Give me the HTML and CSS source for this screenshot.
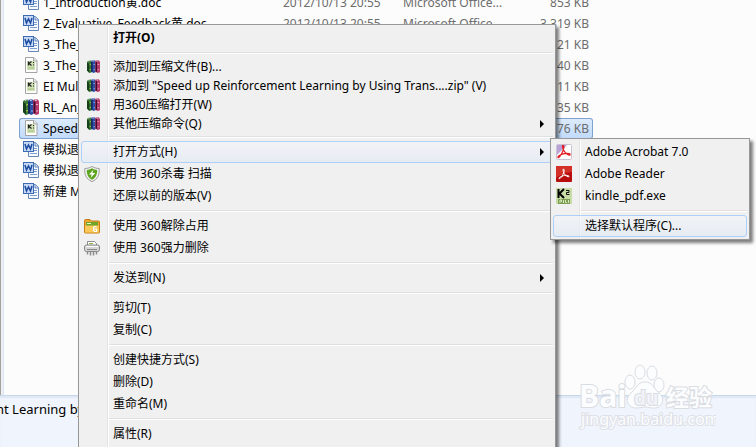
FILE: index.html
```html
<!DOCTYPE html>
<html lang="zh-CN">
<head>
    <meta charset="utf-8">
    <title>Explorer</title>
    <link rel="stylesheet" href="styles.css">
</head>
<body>
    <svg class="sprite" aria-hidden="true">
        <symbol id="word" viewBox="0 0 16 16">
            <path d="M5.5 1.5h7l3 3v11h-10z" fill="#f6faff" stroke="#6486b8"/>
            <path d="M12 1.5v3.5h3.5" fill="#cfdff5" stroke="#6486b8"/>
            <path d="M11 7.5h3M11 9.5h3M7 12.5h7" stroke="#7d9fd4"/>
            <rect x="0.5" y="0.5" width="10" height="10" fill="#c5d9f5" stroke="#3d6cb5"/>
            <path d="M2 3l1.500 5L5.500 4l2 4L9 3" fill="none" stroke="#1b4a9e" stroke-width="1.500"/>
        </symbol>
        <symbol id="kfile" viewBox="0 0 16 16">
            <path d="M2.500 0.500h8.500l3 3v12H2.500z" fill="#fdfdfd" stroke="#a3a3a3"/>
            <path d="M10.500 0.500v3.500h3.500" fill="#e6e6e6" stroke="#a3a3a3"/>
            <rect x="4" y="4" width="8" height="9" fill="#cfe0b4"/>
            <path d="M5.500 4.500v4M8.500 4.500l-2.500 2 2.500 2M10 5.500h1M10 8h1" fill="none" stroke="#222" stroke-width="1.200"/>
            <path d="M5 11h6" stroke="#a3bd80"/>
        </symbol>
        <symbol id="books" viewBox="0 0 16 16">
            <path d="M0 2l4-2 2 2v13l-3 1-3-3z" fill="#3b7a35"/>
            <path d="M0 3l3 2v11l-3-3z" fill="#163f1b"/>
            <path d="M3 6l2-.5M3 12l2-.5" stroke="#b5cf4a"/>
            <path d="M5 1l4-1 1.500 2v13l-2.500 1-3-2z" fill="#2c4fa5"/>
            <path d="M6 2.500v12" stroke="#101a48" stroke-width="1.500"/>
            <path d="M8 5.500h2M8 12h2" stroke="#8bbcf0"/>
            <path d="M10 1l4-1 2 2v13l-3 1-3-2z" fill="#b83a6c"/>
            <path d="M11.500 2.500v12" stroke="#3e0c2d" stroke-width="1.800"/>
            <path d="M13 5.500h2M13 12h2" stroke="#edb3c8"/>
            <path d="M2 1.500l2-1 1 1M7 1.500l2-.5M12 1.500l2-.5" fill="none" stroke="#ddd"/>
        </symbol>
        <symbol id="shield" viewBox="0 0 16 16">
            <path d="M8 .5C5.500 2 3 2.500.8 2.500.5 8.500 2 13 8 15.600 14 13 15.500 8.500 15.200 2.500 13 2.500 10.500 2 8 .5z" fill="#f4f4f4" stroke="#999"/>
            <path d="M8 2.300C6 3.500 4.500 3.800 2.800 4 2.800 8.500 4 11.800 8 13.800c4-2 5.200-5.300 5.200-9.800C11.500 3.800 10 3.500 8 2.300z" fill="#5da51e"/>
            <path d="M9.500 3.800L5 8.400h2.700L6.600 12l4.600-5H8.400z" fill="#fff"/>
        </symbol>
        <symbol id="folder" viewBox="0 0 16 16">
            <path d="M.5 2.500q0-1 1-1H6l1.500 1.500h7q1 0 1 1v10q0 1-1 1h-13q-1 0-1-1z" fill="#eea52d" stroke="#c67d15"/>
            <path d="M2 4h12v4H2z" fill="#6fa62b"/>
            <path d="M3 5.500h4" stroke="#e7f4c8"/>
            <path d="M1 7.500h14v7H1z" fill="#f9c95a"/>
            <path d="M12.500 8.500h-2l-1 1v3l1 1h2v-2.500h-3" fill="none" stroke="#fff" stroke-width="1.200"/>
        </symbol>
        <symbol id="shredder" viewBox="0 0 16 16">
            <path d="M3.500 6V1.500h7l2 2V6" fill="#fff" stroke="#8a8a8a"/>
            <path d="M5 3.500h4" stroke="#8cb640"/>
            <rect x=".5" y="5" width="15" height="6.500" rx="2" fill="#d5d5d5" stroke="#858585"/>
            <path d="M2 6.500h12" stroke="#fff"/>
            <path d="M3 9.500h10" stroke="#888"/>
            <path d="M3.500 11v3.500M6.500 11v4.500M9.500 11v4.500M12.500 11v3.500" stroke="#8d8d8d" stroke-width="1.500"/>
        </symbol>
        <symbol id="acrobat" viewBox="0 0 16 16">
            <rect x=".5" y=".5" width="15" height="15" rx="1" fill="#fff" stroke="#c9c3d2"/>
            <path d="M1 1h10L1 11z" fill="#b9a3d6"/>
            <path d="M7 1.500c1.500 0 .8 4-1 7.500S2.500 14 2 13.500c-.8-1 3-3.500 7-4s5.500.5 5 1.300c-.7 1-4.500-1-6-4S6 1.500 7 1.500z" fill="none" stroke="#e32129" stroke-width="1.300"/>
        </symbol>
        <symbol id="reader" viewBox="0 0 16 16">
            <rect width="16" height="16" rx="1" fill="#b80d0d"/>
            <path d="M0 0h16v6Q8 6 0 12z" fill="#d33028"/>
            <path d="M7.500 3c1.300 0 .7 3-.8 6S3.500 13 3 12.600c-.7-.8 2.500-2.600 5.500-3.100s5 .4 4.600 1.100c-.6.800-3.800-.8-5-3.100S6.800 3 7.500 3z" fill="none" stroke="#fff"/>
        </symbol>
        <symbol id="kindle" viewBox="0 0 16 16">
            <rect width="16" height="16" fill="#c8dca8"/>
            <path d="M2.500 1v9M8 1L3.500 5.500 8 10" fill="none" stroke="#000" stroke-width="2"/>
            <path d="M10 2.500h3v2h-2.500v2H13.500" fill="none" stroke="#111"/>
            <rect x="2" y="11" width="12" height="5" fill="#7c9e50"/>
            <path d="M4 15v-3h1.500v2M7.500 12v3M9.500 12v2.500h1.500M12.500 12v3" fill="none" stroke="#d8e8bd"/>
        </symbol>
    </svg>

    <div class="window">
        <div class="content">
            <div class="nav-edge"></div>
            <table class="files">
                <colgroup>
                    <col class="col-name"><col class="col-date"><col class="col-type"><col class="col-size">
                </colgroup>
                <tr><td><svg><use href="#word"/></svg>1_Introduction黄.doc</td><td>2012/10/13 20:55</td><td>Microsoft Office...</td><td>853 KB</td></tr>
                <tr><td><svg><use href="#word"/></svg>2_Evaluative_Feedback黄.doc</td><td>2012/10/13 20:55</td><td>Microsoft Office...</td><td>3,319 KB</td></tr>
                <tr><td><svg><use href="#word"/></svg>3_The_</td><td></td><td></td><td>21 KB</td></tr>
                <tr><td><svg><use href="#kfile"/></svg>3_The_</td><td></td><td></td><td>40 KB</td></tr>
                <tr><td><svg><use href="#kfile"/></svg>EI Mul</td><td></td><td></td><td>11 KB</td></tr>
                <tr><td><svg><use href="#books"/></svg>RL_An_</td><td></td><td></td><td>35 KB</td></tr>
                <tr class="selected"><td><svg><use href="#kfile"/></svg>Speed</td><td></td><td></td><td>76 KB</td></tr>
                <tr><td><svg><use href="#word"/></svg>模拟退</td><td></td><td></td><td></td></tr>
                <tr><td><svg><use href="#word"/></svg>模拟退</td><td></td><td></td><td></td></tr>
                <tr><td><svg><use href="#word"/></svg>新建 M</td><td></td><td></td><td></td></tr>
            </table>
        </div>
        <div class="details"><span>nt Learning by</span></div>
    </div>

    <svg class="watermark" viewBox="0 0 140 70">
        <g class="mark">
            <ellipse cx="54" cy="22" rx="5" ry="7"/>
            <ellipse cx="64" cy="12" rx="5" ry="7"/>
            <ellipse cx="76" cy="13" rx="5" ry="7"/>
            <ellipse cx="83" cy="25" rx="5" ry="7"/>
            <path d="M69 22c-8 0-8 6-14 11-7 6-3 15 5 15 4 0 6-1 9-1s5 1 9 1c8 0 12-9 5-15-6-5-6-11-14-11z"/>
            <text class="brand" x="3" y="47">Bai</text>
            <text class="brand du" x="58" y="45">du</text>
            <text class="brand cn" x="90" y="46">经验</text>
            <text class="site" x="5" y="65">jingyan.baidu.com</text>
        </g>
    </svg>

    <div class="menu context-menu">
        <button class="default">打开(O)</button>
        <hr>
        <button class="compact"><svg><use href="#books"/></svg>添加到压缩文件(B)...</button>
        <button class="compact"><svg><use href="#books"/></svg>添加到 "Speed up Reinforcement Learning by Using Trans....zip" (V)</button>
        <button class="compact"><svg><use href="#books"/></svg>用360压缩打开(W)</button>
        <button class="compact more"><svg><use href="#books"/></svg>其他压缩命令(Q)</button>
        <hr>
        <button class="more active">打开方式(H)</button>
        <button><svg><use href="#shield"/></svg>使用 360杀毒 扫描</button>
        <button>还原以前的版本(V)</button>
        <hr>
        <button><svg><use href="#folder"/></svg>使用 360解除占用</button>
        <button><svg><use href="#shredder"/></svg>使用 360强力删除</button>
        <hr>
        <button class="more">发送到(N)</button>
        <hr>
        <button>剪切(T)</button>
        <button>复制(C)</button>
        <hr>
        <button>创建快捷方式(S)</button>
        <button>删除(D)</button>
        <button>重命名(M)</button>
        <hr>
        <button>属性(R)</button>
    </div>

    <div class="menu open-with">
        <button><svg><use href="#acrobat"/></svg>Adobe Acrobat 7.0</button>
        <button><svg><use href="#reader"/></svg>Adobe Reader</button>
        <button><svg><use href="#kindle"/></svg>kindle_pdf.exe</button>
        <hr>
        <button class="active">选择默认程序(C)...</button>
    </div>
</body>
</html>
```

FILE: styles.css
```css
body {
    margin: 0;
    height: 100vh;
    overflow: hidden;
    position: relative;
    font-family: "Noto Sans", "Noto Sans CJK SC", sans-serif;
    font-size: 12px;
    color: #000;
}
.sprite {
    position: absolute;
    width: 0;
    height: 0;
}
.window {
    display: flex;
    flex-direction: column;
    height: 100%;
}
.content {
    flex: 1;
    display: flex;
    align-items: flex-start;
    overflow: hidden;
    background: #fcfcfc;
}
.nav-edge {
    box-sizing: border-box;
    width: 4px;
    height: 100%;
    margin-right: 15px;
    background: #f0f0f0;
    border-right: 1px solid #d6e5f5;
    border-left: 1px solid #a0a0a0;
}
.details {
    height: 51px;
    background: #f0f4fc;
    border-top: 1px solid #c8d7ea;
    box-shadow: inset 0 2px 1px #dfe8f5;
}
.details span {
    display: block;
    padding-top: 3px;
    line-height: 20px;
    font-size: 13px;
    margin-left: -4px;
}

/* file list, scrolled by part of a row */
.files {
    table-layout: fixed;
    width: 574px;
    margin-top: -8px;
    border-spacing: 0;
    color: #6d6d6d;
}
.col-name { width: 264px; }
.col-date { width: 120px; }
.col-type { width: 110px; }
.files td {
    box-sizing: border-box;
    height: 21px;
    padding: 0 0 1px;
    line-height: 17px;
    white-space: nowrap;
    border: 1px solid transparent;
    border-width: 1px 0;
}
.files td:first-child {
    color: #000;
    padding-left: 4px;
}
.files td:last-child {
    text-align: right;
    padding-right: 4px;
}
.files svg {
    width: 16px;
    height: 16px;
    margin-right: 4px;
    vertical-align: -3px;
}
.files .selected td {
    background: linear-gradient(#dcebfc, #c1dbfc);
    border-color: #7da2ce;
}
.files .selected td:first-child {
    border-left-width: 1px;
    border-radius: 3px 0 0 3px;
    padding-left: 3px;
}
.files .selected td:last-child {
    border-right-width: 1px;
    border-radius: 0 3px 3px 0;
    padding-right: 3px;
}

/* menus */
.menu {
    position: absolute;
    box-sizing: border-box;
    padding: 2px;
    border: 1px solid #979797;
    background: linear-gradient(90deg, transparent 28px, #e2e3e3 28px, #e2e3e3 29px, #fff 29px, #fff 30px, transparent 30px) #f0f0f0;
    box-shadow: 3px 3px 3px rgba(0, 0, 0, 0.5);
}
.context-menu {
    left: 78px;
    top: 24px;
    width: 478px;
}
.open-with {
    left: 550px;
    top: 138px;
    width: 200px;
}
.menu button {
    position: relative;
    display: block;
    box-sizing: border-box;
    width: 100%;
    height: 22px;
    padding: 0 0 0 31px;
    border: 1px solid transparent;
    border-radius: 3px;
    background: none;
    font: inherit;
    line-height: 20px;
    color: #000;
    text-align: left;
    white-space: nowrap;
}
.menu .compact {
    height: 19px;
    line-height: 17px;
}
.menu .default {
    font-weight: bold;
}
.menu .active {
    background: linear-gradient(rgba(242, 244, 248, 0.7), rgba(226, 234, 245, 0.7));
    border-color: #aecff7;
}
.menu button svg {
    position: absolute;
    left: 2px;
    top: 2px;
    width: 16px;
    height: 16px;
}
.menu .compact svg {
    left: 5px;
    top: 2px;
    width: 13px;
    height: 13px;
}
.menu .more::after {
    content: "";
    position: absolute;
    right: 8px;
    top: 50%;
    margin-top: -4px;
    border: 4px solid transparent;
    border-left-color: #000;
    border-right-width: 0;
}
.menu hr {
    height: 1px;
    margin: 3px 0 3px 28px;
    border: 0;
    background: #e0e0e0;
    border-bottom: 1px solid #fff;
}

.watermark {
    position: absolute;
    right: 40px;
    bottom: 17px;
    width: 140px;
    height: 70px;
}
.mark {
    fill: #fcfdff;
    stroke: #d9dce1;
    stroke-width: 1px;
}
.brand {
    font-family: "Open Sans", "Noto Sans CJK SC", sans-serif;
    font-size: 30px;
    font-weight: bold;
    stroke-width: 2px;
    paint-order: stroke;
}
.du {
    font-size: 19px;
    fill: #f0f3f9;
}
.cn {
    font-size: 23px;
}
.site {
    font-size: 16px;
    stroke: #dde0e6;
    stroke-width: 2px;
    paint-order: stroke;
}
```
